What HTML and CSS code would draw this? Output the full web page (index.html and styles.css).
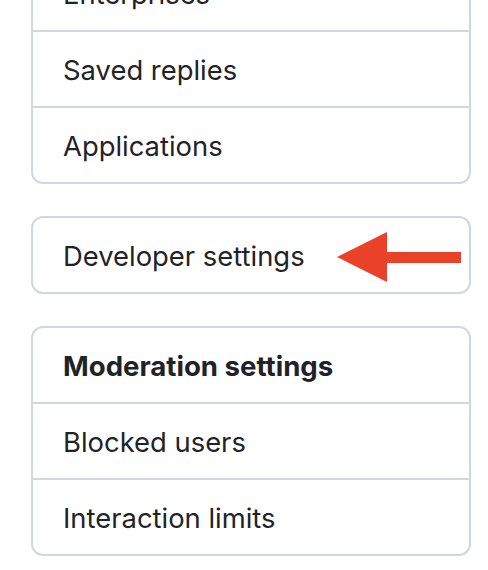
FILE: index.html
```html
<!DOCTYPE html>
<html>
<head>
<meta charset="utf-8">
<link rel="stylesheet" href="styles.css">
</head>
<body>
<div class="page">
  <nav class="menu menu-first">
    <a class="menu-item">Enterprises</a>
    <a class="menu-item">Saved replies</a>
    <a class="menu-item">Applications</a>
  </nav>
  <nav class="menu menu-dev">
    <a class="menu-item">Developer settings</a>
    <svg class="arrow" width="124" height="50" viewBox="0 0 124 50" aria-hidden="true">
      <polygon points="0,25 50,0 50,50" fill="#ea4129"/>
      <rect x="49" y="20" width="75" height="11" fill="#ea4129"/>
    </svg>
  </nav>
  <nav class="menu">
    <h3 class="menu-heading">Moderation settings</h3>
    <a class="menu-item">Blocked users</a>
    <a class="menu-item">Interaction limits</a>
  </nav>
</div>
</body>
</html>
```
FILE: styles.css
```css
html, body {
  margin: 0;
  padding: 0;
  background: #ffffff;
}
body {
  font-family: Inter, "Liberation Sans", sans-serif;
  color: #1f2328;
}
.page {
  display: flex;
  flex-direction: column;
  gap: 32px;
  padding: 0 17px 0 31px;
  margin-top: -46px;
}
.menu {
  display: flex;
  flex-direction: column;
  border: 2px solid #d0d7de;
  border-radius: 12px;
  background: #fff;
}
.menu-dev {
  position: relative;
}
.menu-item,
.menu-heading {
  display: block;
  padding: 18px 30px 16px;
  font-size: 27.4px;
  line-height: 40px;
  color: #1f2328;
  border-bottom: 2px solid #d0d7de;
  margin: 0;
}
.menu-item:last-child {
  border-bottom: none;
}
.menu-dev .menu-item {
  border-bottom: none;
}
.menu-heading {
  font-weight: 650;
  font-size: 27.6px;
}
.arrow {
  position: absolute;
  left: 304px;
  top: 14px;
  display: block;
}
```
